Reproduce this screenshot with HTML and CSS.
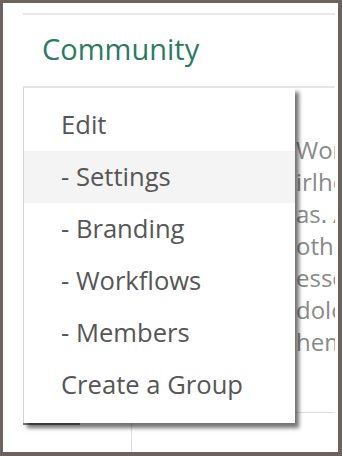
FILE: index.html
```html
<!DOCTYPE html>
<html>
<head>
<meta charset="utf-8">
<link rel="stylesheet" href="styles.css">
</head>
<body>
<div class="frame">
  <div class="page">
    <div class="header">Community</div>
    <div class="body">
      <div class="sidebar">
        <div class="side-tab"></div>
      </div>
      <div class="main">
        <div class="lines">
          <div class="line">Wonderful</div>
          <div class="line">irlhood</div>
          <div class="line">as. All</div>
          <div class="line">others</div>
          <div class="line">essential</div>
          <div class="line">dolor</div>
          <div class="line">hemisphere</div>
        </div>
      </div>
    </div>
  </div>
  <ul class="menu">
    <li class="item">Edit</li>
    <li class="item active">- Settings</li>
    <li class="item">- Branding</li>
    <li class="item">- Workflows</li>
    <li class="item">- Members</li>
    <li class="item">Create a Group</li>
  </ul>
</div>
</body>
</html>
```
FILE: styles.css
```css
html, body {
  margin: 0;
  padding: 0;
}
body {
  background: #6c625f;
  font-family: "Open Sans", "Liberation Sans", sans-serif;
  width: 342px;
  height: 456px;
  overflow: hidden;
}
.frame {
  position: relative;
  margin: 3px 4px 0 3px;
  height: 449px;
  background: #ffffff;
  overflow: hidden;
}
.page {
  margin-left: 20px;
  margin-top: 10px;
  width: 312px;
  border-top: 2px solid #e9e9e9;
  overflow: hidden;
}
.header {
  padding: 14px 0 17px 19px;
  font-size: 29px;
  line-height: 40px;
  color: #2c7a63;
  border-bottom: 2px solid #e6e6e6;
}
.body {
  display: flex;
}
.sidebar {
  width: 108px;
  flex: none;
  border-right: 1px solid #dedede;
  height: 380px;
}
.side-tab {
  margin-top: 335px;
  width: 57px;
  border-bottom: 2px solid #7d7d7d;
}
.main {
  flex: 1;
  min-width: 0;
  overflow: hidden;
}
.lines {
  padding: 46px 0 54px 164px;
  border-bottom: 1px solid #dddddd;
}
.line {
  font-size: 24px;
  line-height: 32px;
  color: #8a8a8a;
  white-space: nowrap;
}
.menu {
  position: absolute;
  left: 20px;
  top: 84px;
  width: 271px;
  margin: 0;
  padding: 11px 0 12px;
  list-style: none;
  background: #ffffff;
  border-left: 1px solid #d2d2d2;
  border-top: 1px solid #e4e4e4;
  box-shadow: 4px 5px 4px rgba(0, 0, 0, 0.55);
}
.item {
  height: 52px;
  line-height: 52px;
  padding-left: 37px;
  font-size: 25.6px;
  color: #565656;
  white-space: nowrap;
}
.item.active {
  background: #f4f4f4;
}
```
